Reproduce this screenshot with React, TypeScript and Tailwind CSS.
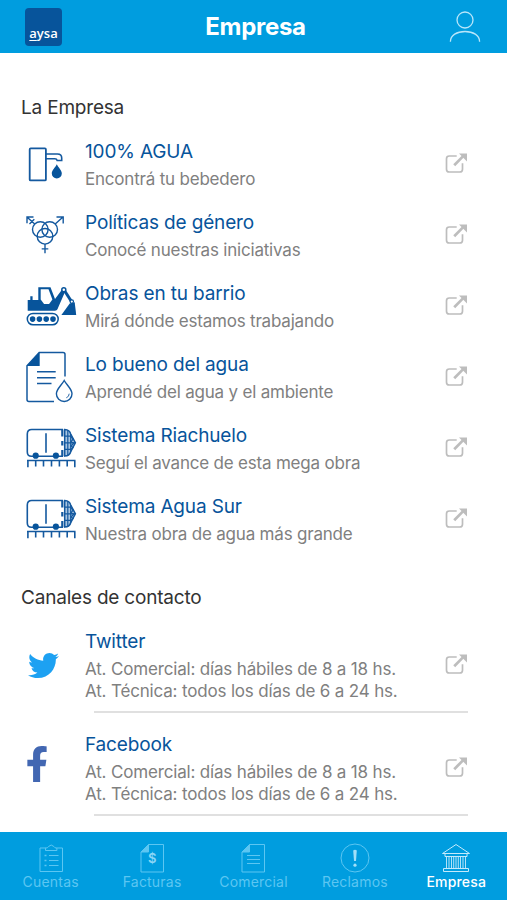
import React from "react";
import { FaFacebookF, FaTwitter } from "react-icons/fa";

const WaterTapIcon = () => (
  <svg width="60" height="71" viewBox="0 0 60 71" fill="none" stroke="#14599f" strokeWidth="1.8">
    <rect x="8.7" y="20.4" width="16.2" height="32" rx="1" />
    <path d="M25 26h11.5q4.2 0 4.2 4v2.5h-4.5q-.5-1.8-2.4-1.8H25" strokeWidth="1.6" />
    <path d="M35.8 36.2c-1.6 3.3-5 6-5 9.3a5 5 0 0 0 10 0c0-3.3-3.4-6-5-9.3z" fill="#07549b" stroke="none" />
  </svg>
);

const GenderIcon = () => (
  <svg width="60" height="71" viewBox="0 0 60 71" fill="none" stroke="#14599f" strokeWidth="1.4">
    <circle cx="19.3" cy="30.5" r="7.8" />
    <circle cx="28.7" cy="30.5" r="7.8" />
    <circle cx="24" cy="37.3" r="7.8" />
    <path d="M13.7 24.9 6.2 18.2M6 24.3V18h6.5M8.5 25l4.8-4.8" />
    <path d="M34.2 24.9 42 18M35.5 18h6.7v6.4" />
    <path d="M24 45.1v9.2M20.7 49.9h6.6" />
  </svg>
);

const ExcavatorIcon = () => (
  <svg width="60" height="71" viewBox="0 0 60 71" fill="none" stroke="#07549b" strokeWidth="1.5">
    <path d="M6.7 30h2.6v-3.8h2.3V30h5.7V17.3h12.2l4.5 11.7 7.3-9.8 3.2 1.5-7.2 16.5q-1 3.5-3.5 3.5H6.7z" fill="#07549b" stroke="none" />
    <path d="M19.7 19.3h7.8l3.9 10.2-3.3 4.5h-5l-3.4-4.5z" fill="#fff" stroke="none" />
    <path d="m43.6 20.8 6.7 10.5" strokeWidth="3" />
    <circle cx="42.8" cy="19.7" r="2" fill="#fff" />
    <path d="M53.7 32.2 55.2 45H40.4l8.3-11.6z" fill="#07549b" stroke="none" />
    <circle cx="50.8" cy="31.6" r="1.7" fill="#fff" strokeWidth="1.2" />
    <rect x="6.3" y="43.4" width="30.9" height="11.4" rx="5.7" />
    <g fill="#07549b" stroke="none">
      <circle cx="11.6" cy="49.1" r="2.8" />
      <circle cx="18.4" cy="49.1" r="2.8" />
      <circle cx="25.2" cy="49.1" r="2.8" />
      <circle cx="32" cy="49.1" r="2.8" />
    </g>
  </svg>
);

const WaterDocumentIcon = () => (
  <svg width="60" height="71" viewBox="0 0 60 71" fill="none" stroke="#14599f" strokeWidth="1.5">
    <path d="M33 60.5H8q-2 0-2-2V24.7L18.2 11.5H42q2 0 2 2v22" />
    <path d="M18.7 11v14H5.7z" fill="#07549b" stroke="none" />
    <path d="M16 30.8h18.7M16 36.7h18.7M16 42.5h14.5" />
    <path d="M43.2 39.5c-2.8 5-7.8 8.7-7.8 13.2a7.8 7.8 0 0 0 15.6 0c0-4.5-5-8.2-7.8-13.2z" strokeWidth="1.4" />
    <path d="M48.2 52.7q0 3-2.9 4.1" strokeWidth=".9" />
  </svg>
);

const TunnelBorerIcon = () => (
  <svg width="60" height="71" viewBox="0 0 60 71" fill="none" stroke="#14599f" strokeWidth="1.6">
    <path d="M42 44.2H10.5q-4.2 0-4.2-4.3V22q0-4.5 4.5-4.5H42" />
    <path d="M25 21.3v19.5" />
    <path d="M41.3 17.5v7M41.3 29v4.5M41.3 38v6.2" strokeWidth="2.2" />
    <path d="M43.7 17.6q5 .3 6 4.400l4.700 8.800-4.700 8.900q-1 4.100-6 4.400z" fill="#a9c6e2" strokeWidth="1.5" />
    <path d="M49.7 22v17.7M44 24.2h6M44 30.8h10M44 37.3h6M46.8 18v26" strokeWidth="1.2" />
    <path d="m50 24.5 2 2.5-2 3 3 1-3 3 2 1.5-2 2" strokeWidth="1.3" />
    <g fill="#07549b" stroke="none">
      <circle cx="14.7" cy="43.7" r="3.1" />
      <circle cx="34.9" cy="43.7" r="3.1" />
    </g>
    <path d="M6 48.5h48.5M6.9 48.5v6.7M14.7 48.5v6M22.5 48.5v6M30.5 48.5v6M38.4 48.5v6M46.2 48.5v6M53.8 48.5v6.7" />
  </svg>
);

const ExternalIcon = () => (
  <svg width="24" height="22" viewBox="0 0 24 22" fill="none" stroke="#bdbdbd" strokeWidth="1.7" className="mb-0.5">
    <path d="M12.7 4H5.3Q2.5 4 2.5 6.8v10.4Q2.5 20 5.3 20h10.400q2.800 0 2.800-2.800v-6" />
    <path d="m10.200 13.300 9-9.200" strokeWidth="2.7" />
    <path d="M15 1.500h8v8z" fill="#bdbdbd" stroke="none" />
  </svg>
);

const UserIcon = () => (
  <svg width="32" height="34" viewBox="0 0 32 34" fill="none" stroke="#b9e6fa" strokeWidth="1.3">
    <circle cx="16" cy="10" r="8" />
    <path d="M1.4 31.700c0-6.500 6.500-10.200 14.600-10.200s14.600 3.700 14.600 10.200" />
  </svg>
);

const ClipboardIcon = () => (
  <svg width="32" height="32" viewBox="0 0 32 32" fill="none" stroke="currentColor">
    <path d="M11 5H5v23.5h22.5V5h-6" />
    <path d="M10.500 7.500V5.200q2.500-.2 3-1.700 2.700-3 5.400 0 .5 1.500 3 1.700v2.300z" />
    <path d="M14 12.500h9.500M14 17.500h9.500M14 22.500h9.500" />
    <path d="M9.500 12.500h2M9.500 17.500h2M9.500 22.500h2" strokeWidth="1.5" />
  </svg>
);

const InvoiceIcon = () => (
  <svg width="32" height="32" viewBox="0 0 32 32" fill="none" stroke="currentColor">
    <path d="M12.5 1.5H27.5V29H5V9z" />
    <path d="M12.5 1.5V9H5z" fill="currentColor" />
    <text x="16.3" y="20" fill="#8ad6f6" stroke="none" fontSize="13" fontWeight="600" textAnchor="middle">$</text>
  </svg>
);

const CommercialIcon = () => (
  <svg width="32" height="32" viewBox="0 0 32 32" fill="none" stroke="currentColor">
    <path d="M12.5 1.5H27.5V29H5V9z" />
    <path d="M12.5 1.5V9H5z" fill="currentColor" />
    <path d="M10 12.5h13M10 16.5h13M10 20.5h13" />
  </svg>
);

const ClaimIcon = () => (
  <svg width="32" height="32" viewBox="0 0 32 32" fill="none" stroke="currentColor">
    <circle cx="16" cy="15" r="14" />
    <path d="M14.2 7.500q1.800-1.500 3.600 0l-.8 10.500h-2z" fill="#a0dff8" stroke="none" />
    <circle cx="16" cy="22.2" r="1.6" fill="#a0dff8" stroke="none" />
  </svg>
);

const BankIcon = () => (
  <svg width="32" height="32" viewBox="0 0 32 32" fill="none" stroke="#c5eafb">
    <path d="M2.5 10.5 16 1.500l13.500 9z" />
    <path d="M5 10.5v3h22v-3M6 25.5h20M3.5 28.5v-3h25v3z" />
    <path d="M6.5 13.5V25M9 13.5V25M11.5 13.5V25M13.7 13.5V25M16 13.5V25M18.3 13.5V25M20.5 13.5V25M23 13.5V25M25.5 13.5V25" strokeWidth=".9" />
  </svg>
);

const companyItems = [
  { title: "100% AGUA", text: "Encontrá tu bebedero", icon: WaterTapIcon },
  { title: "Políticas de género", text: "Conocé nuestras iniciativas", icon: GenderIcon },
  { title: "Obras en tu barrio", text: "Mirá dónde estamos trabajando", icon: ExcavatorIcon },
  { title: "Lo bueno del agua", text: "Aprendé del agua y el ambiente", icon: WaterDocumentIcon },
  { title: "Sistema Riachuelo", text: "Seguí el avance de esta mega obra", icon: TunnelBorerIcon },
  { title: "Sistema Agua Sur", text: "Nuestra obra de agua más grande", icon: TunnelBorerIcon },
];

const contactItems = [
  { title: "Twitter", icon: <FaTwitter size={31} color="#1da1f2" className="mt-px" /> },
  { title: "Facebook", icon: <FaFacebookF size={36} color="#4267b2" className="-ml-[9px] mb-2" /> },
];

const tabs = [
  { label: "Cuentas", icon: ClipboardIcon },
  { label: "Facturas", icon: InvoiceIcon },
  { label: "Comercial", icon: CommercialIcon },
  { label: "Reclamos", icon: ClaimIcon },
  { label: "Empresa", icon: BankIcon, active: true },
];

const Header = () => (
  <header className="flex h-[53px] shrink-0 items-center justify-between bg-[#009ddf] pl-[25px] pr-[26px]">
    <div className="flex h-[38px] w-[37px] items-end justify-center rounded bg-[#07549b] pb-1">
      <span className="font-['Open_Sans',sans-serif] text-[13px] font-semibold leading-[17px] text-white">
        <span className="underline decoration-1 underline-offset-2">a</span>ysa
      </span>
    </div>
    <h1 className="text-[24px] font-bold tracking-[-0.3px] text-white">Empresa</h1>
    <UserIcon />
  </header>
);

const App = () => {
  return (
    <div className="flex h-[900px] w-full flex-col overflow-hidden bg-white font-['Inter',sans-serif]">
      <Header />

      <main className="min-h-0 flex-1 overflow-hidden pl-[21px] pr-[39px]">
        <h2 className="pt-[41px] text-[19px] leading-[27px] tracking-[-0.2px] text-[#333]">La Empresa</h2>
        <ul className="pt-[7px]">
          {companyItems.map(({ title, text, icon: Icon }) => (
            <li key={title} className="flex h-[71px] items-center">
              <Icon />
              <div className="ml-1 flex-1 whitespace-nowrap pt-1">
                <p className="text-[19px] leading-7 tracking-[-0.15px] text-[#07549b]">{title}</p>
                <p className="text-[17px] leading-[27px] tracking-[-0.2px] text-[#808080]">{text}</p>
              </div>
              <ExternalIcon />
            </li>
          ))}
        </ul>

        <h2 className="pt-[30px] text-[19px] leading-[27px] tracking-[-0.2px] text-[#333]">Canales de contacto</h2>
        <ul className="pt-[7px]">
          {contactItems.map(({ title, icon }) => (
            <li key={title} className="h-[103px] pt-1">
              <div className="flex h-[85px] items-center">
                <div className="w-16 pl-[7px]">{icon}</div>
                <div className="flex-1 whitespace-nowrap">
                  <p className="text-[19px] leading-7 tracking-[-0.15px] text-[#07549b]">{title}</p>
                  <p className="pt-0.5 text-[17px] leading-[22px] tracking-[-0.17px] text-[#808080]">
                    At. Comercial: días hábiles de 8 a 18 hs.
                    <br />
                    At. Técnica: todos los días de 6 a 24 hs.
                  </p>
                </div>
                <ExternalIcon />
              </div>
              <div className="ml-[73px] mt-1 border-b-2 border-[#e0e0e0]" />
            </li>
          ))}
        </ul>
      </main>

      <nav className="grid h-[68px] shrink-0 grid-cols-5 bg-[#009ddf]">
        {tabs.map(({ label, icon: Icon, active }) => (
          <button
            key={label}
            className={`flex flex-col items-center pt-[11px] ${active ? "text-white" : "text-[#5cc6f2]"}`}
          >
            <Icon />
            <span className={`text-[14px] leading-[14px] tracking-[0.2px] ${active ? "font-medium" : ""}`}>{label}</span>
          </button>
        ))}
      </nav>
    </div>
  );
};

export default App;
